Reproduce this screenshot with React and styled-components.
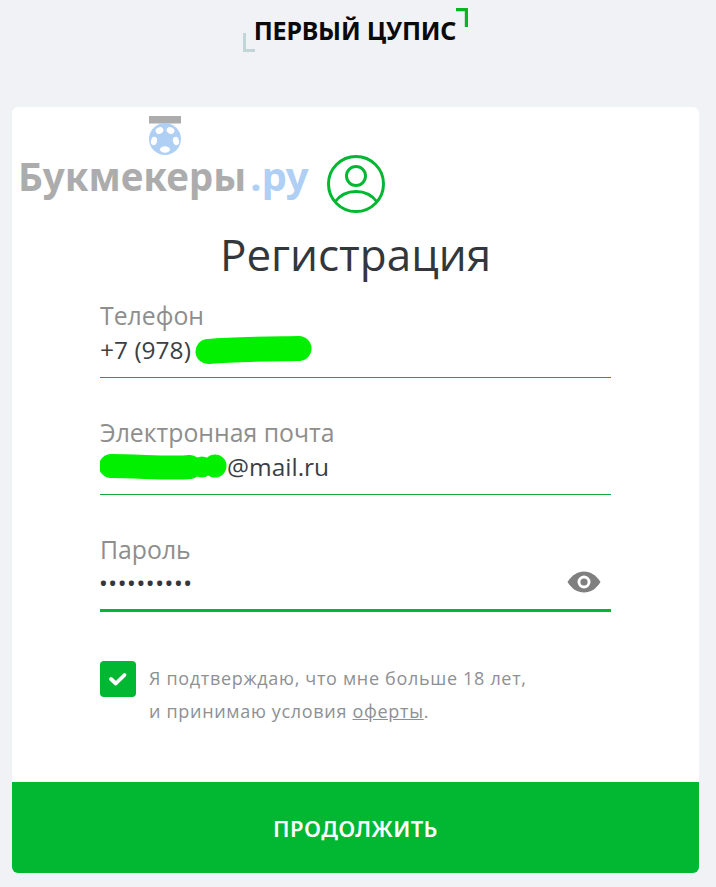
import React from "react";
import styled, { createGlobalStyle } from "styled-components";

const Global = createGlobalStyle`
  html, body { margin: 0; padding: 0; background: #f0f2f6; }
  body { font-family: "Open Sans", "Noto Sans", sans-serif; }
`;
const Page = styled.div`
  width: 716px; height: 887px; box-sizing: border-box; overflow: hidden;
  padding: 0 17px 14px 12px; display: flex; flex-direction: column;
`;
const Header = styled.header`
  height: 107px; flex: none; display: flex; justify-content: center; padding: 8px 0 0 1px; box-sizing: border-box;
`;
const Brand = styled.div`
  position: relative; height: 44px; display: flex; align-items: center; padding: 0 12px 0 11px;
  margin-left: -1px;
`;
const BrandName = styled.span`
  font-family: "Noto Sans", sans-serif;
  font-size: 25px; font-weight: 700; color: #0a0a0a; line-height: 46px; letter-spacing: -0.2px; white-space: nowrap;
`;
const Corner = styled.svg`
  position: absolute; width: 12px; height: 19px;
  ${p => p.$top ? "right: 0; top: 0;" : "left: 0; bottom: 0;"}
`;
const Card = styled.main`
  position: relative; flex: 1; background: #fff; border-radius: 6px; overflow: hidden;
  display: flex; flex-direction: column;
`;
const Body = styled.div`
  flex: 1; padding: 48px 88px 0; display: flex; flex-direction: column;
`;
const AvatarRow = styled.div`display: flex; justify-content: center; height: 58px;`;
const Title = styled.h1`
  margin: 10px 0 0; font-size: 44px; line-height: 62px; font-weight: 400; color: #33373c; text-align: center;
`;
const Fields = styled.div`display: flex; flex-direction: column; gap: 38px; margin-top: 14px;`;
const Field = styled.div`
  position: relative; height: 79px; box-sizing: border-box; border-bottom: ${p => p.$active ? "3px solid #02b732" : "1px solid #14a83c"};
  display: flex; flex-direction: column;
`;
const Label = styled.label`
  font-size: 24.8px; line-height: 33px; color: #8e8e8e; height: 34px; display: block;
`;
const Value = styled.div`
  font-size: 24.5px; line-height: 34px; color: #3a3f46; display: flex; align-items: center; white-space: nowrap;
`;
const Dots = styled.span`
  font-size: 18px; letter-spacing: 2.6px; color: #33373c; line-height: 34px; font-weight: 700;
  margin-top: -1px;
`;
const Blot = styled.svg`
  flex: none; display: block; margin-left: ${p => p.$gap || 0}px;
`;
const EyeButton = styled.button`
  position: absolute; right: 10px; bottom: 16px; width: 34px; height: 22px; padding: 0; border: 0; background: none;
  display: flex;
`;
const Agree = styled.div`
  display: flex; gap: 13px; margin-top: 49px; align-items: flex-start;
`;
const Check = styled.div`
  width: 36px; height: 36px; border-radius: 4px; background: #02b732; flex: none;
  display: flex; align-items: center; justify-content: center; color: #fff;
`;
const AgreeText = styled.p`
  margin: 0; padding-top: 1px; font-size: 18px; line-height: 33px; color: #8d9094; letter-spacing: 0.68px;
  a { color: #8d9094; text-decoration: underline; }
`;
const Submit = styled.button`
  flex: none; height: 91px; width: 100%; border: 0; background: #02b732; color: #fff;
  font-family: "Noto Sans", sans-serif; font-size: 22px; font-weight: 600; letter-spacing: 0.4px;
`;
const Watermark = styled.div`
  position: absolute; left: 6px; top: 9px; display: flex; flex-direction: column; align-items: flex-start;
`;
const Medal = styled.svg`display: block; width: 32px; height: 40px; margin-left: 131px;`;
const WmText = styled.div`
  font-size: 38.6px; font-weight: 700; line-height: 44px; color: #acacac; white-space: nowrap; margin-top: -2px;
  font-family: "Noto Sans", sans-serif;
`;
const WmDomain = styled.span`color: #afcff5; margin-left: 4px; font-size: 40px;`;

const Ball = () => (
  <Medal viewBox="0 0 32 40">
    <rect x="0" y="0" width="32" height="7.5" fill="#acacac" />
    <circle cx="16" cy="23" r="16" fill="#afcff5" />
    <g fill="#fff">
      <ellipse cx="10.5" cy="14.5" rx="4" ry="3.2" transform="rotate(-25 10.5 14.5)" />
      <ellipse cx="21.5" cy="14.5" rx="4" ry="3.2" transform="rotate(25 21.5 14.5)" />
      <ellipse cx="5" cy="25" rx="3" ry="4.2" transform="rotate(15 5 25)" />
      <ellipse cx="27" cy="25" rx="3" ry="4.2" transform="rotate(-15 27 25)" />
      <ellipse cx="16" cy="33.5" rx="5" ry="3.2" />
    </g>
  </Medal>
);

export default function App() {
  return (
    <>
      <Global />
      <Page>
        <Header>
          <Brand>
            <Corner viewBox="0 0 12 19"><path d="M1.5 0v17.5H12" fill="none" stroke="#c2d6d8" strokeWidth="3" /></Corner>
            <BrandName>ПЕРВЫЙ ЦУПИС</BrandName>
            <Corner viewBox="0 0 12 19" $top><path d="M0 1.5h10.5V19" fill="none" stroke="#07b521" strokeWidth="3.4" /></Corner>
          </Brand>
        </Header>
        <Card>
          <Body>
            <AvatarRow>
              <svg width="58" height="58" viewBox="0 0 58 58" fill="none" stroke="#02b732" strokeWidth="3">
                <circle cx="29" cy="29" r="27.5" />
                <circle cx="29" cy="21" r="9.5" />
                <path d="M8 47c5-7 12-10.5 21-10.5S45 40 50 47" />
              </svg>
            </AvatarRow>
            <Title>Регистрация</Title>
            <Fields>
              <Field>
                <Label>Телефон</Label>
                <Value>
                  +7 (978)
                  <Blot $gap={4} width="117" height="30" viewBox="0 0 117 30">
                    <path d="M13 16.5 C40 14 70 14 104 13.5" fill="none" stroke="#00f000" strokeWidth="25" strokeLinecap="round" />
                  </Blot>
                </Value>
              </Field>
              <Field>
                <Label>Электронная почта</Label>
                <Value>
                  <Blot width="127" height="30" viewBox="0 0 127 30">
                    <path d="M11 14 C40 14 70 17 90 15" fill="none" stroke="#00f000" strokeWidth="24" strokeLinecap="round" />
                    <circle cx="115" cy="14" r="11.5" fill="#00f000" />
                    <circle cx="102" cy="15" r="10.5" fill="#00f000" />
                  </Blot>
                  @mail.ru
                </Value>
              </Field>
              <Field $active>
                <Label>Пароль</Label>
                <Value><Dots>••••••••••</Dots></Value>
                <EyeButton aria-label="Показать пароль">
                  <svg width="34" height="22" viewBox="0 0 34 22">
                    <path fillRule="evenodd" fill="#7f7f7f" d="M0.5 11C5 4 10.5 0.5 17 0.5S29 4 33.5 11C29 18 23.5 21.5 17 21.5S5 18 0.5 11ZM17 4.5a6.5 6.5 0 1 0 0 13a6.5 6.5 0 1 0 0-13Z" />
                    <circle cx="17" cy="11" r="3.6" fill="#7f7f7f" />
                  </svg>
                </EyeButton>
              </Field>
            </Fields>
            <Agree>
              <Check>
                <svg width="20" height="16" viewBox="0 0 20 16" fill="none" stroke="#fff" strokeWidth="3.8" strokeLinecap="round" strokeLinejoin="round">
                  <path d="M3 8l4.8 4.5L16.5 4" />
                </svg>
              </Check>
              <AgreeText>
                Я подтверждаю, что мне больше 18 лет,<br />
                и принимаю условия <a href="#o">оферты</a>.
              </AgreeText>
            </Agree>
          </Body>
          <Submit>ПРОДОЛЖИТЬ</Submit>
          <Watermark>
            <Ball />
            <WmText>Букмекеры<WmDomain>.ру</WmDomain></WmText>
          </Watermark>
        </Card>
      </Page>
    </>
  );
}
